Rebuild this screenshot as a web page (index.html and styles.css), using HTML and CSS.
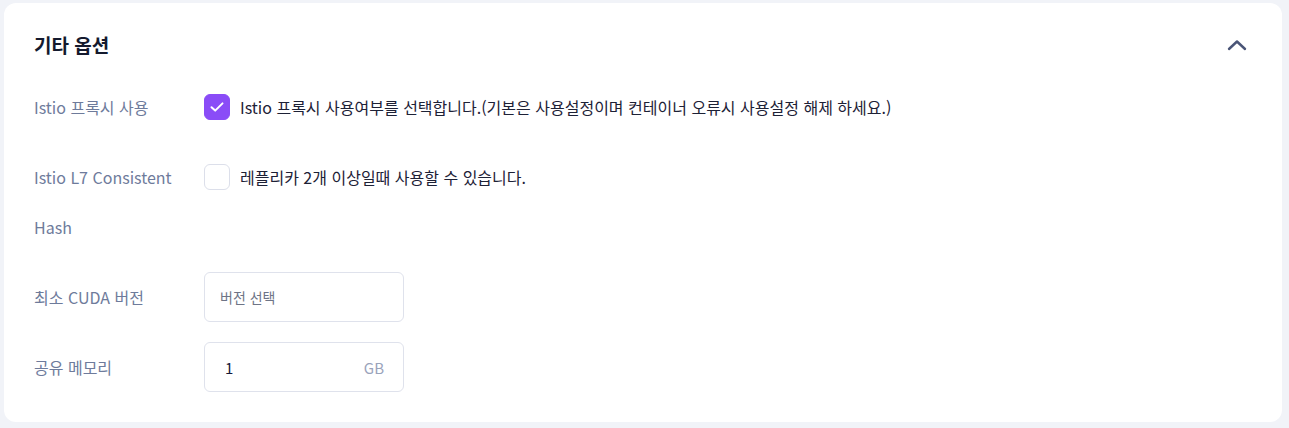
FILE: index.html
```html
<!DOCTYPE html>
<html lang="ko">
<head>
  <meta charset="UTF-8" />
  <meta name="viewport" content="width=device-width, initial-scale=1.0"/>
  <title>기타 옵션</title>
  <link rel="stylesheet" href="styles.css">
</head>
<body>

  <section class="panel">
    <div class="panel-head">
      <h2>기타 옵션</h2>
      <button class="toggle" aria-label="접기">
        <svg width="20" height="12" viewBox="0 0 20 12"><path d="M2 10 L10 2.5 L18 10" fill="none" stroke="#4a5577" stroke-width="2.4" stroke-linecap="round" stroke-linejoin="round"/></svg>
      </button>
    </div>

    <div class="rows">
      <div class="row">
        <div class="label">Istio 프록시 사용</div>
        <label class="check">
          <span class="box checked">
            <svg width="16" height="12" viewBox="0 0 16 12"><path d="M2.5 6.2 L6.2 9.6 L13.5 2.4" fill="none" stroke="#fff" stroke-width="2" stroke-linecap="round" stroke-linejoin="round"/></svg>
          </span>
          Istio 프록시 사용여부를 선택합니다.(기본은 사용설정이며 컨테이너 오류시 사용설정 해제 하세요.)
        </label>
      </div>

      <div class="row">
        <div class="label">Istio L7 Consistent Hash</div>
        <label class="check">
          <span class="box"></span>
          레플리카 2개 이상일때 사용할 수 있습니다.
        </label>
      </div>

      <div class="row">
        <div class="label">최소 CUDA 버전</div>
        <div class="field">
          <span class="placeholder">버전 선택</span>
        </div>
      </div>

      <div class="row">
        <div class="label">공유 메모리</div>
        <div class="field">
          <span class="value">1</span>
          <span class="unit">GB</span>
        </div>
      </div>
    </div>
  </section>

</body>
</html>
```

FILE: styles.css
```css
* {
  margin: 0;
  padding: 0;
  box-sizing: border-box;
}

body {
  font-family: "Noto Sans CJK KR", "Noto Sans", sans-serif;
  background-color: #f1f3f8;
  color: #1d2136;
  padding: 3px 7px 6px 4px;
}

.panel {
  background: #fff;
  border-radius: 12px;
  padding: 24px 30px 30px 30px;
}

.panel-head {
  display: flex;
  justify-content: space-between;
  align-items: center;
  height: 35px;
  margin-bottom: 20px;
}

.panel-head h2 {
  font-size: 19px;
  font-weight: 700;
  color: #141a2e;
}

.toggle {
  border: none;
  background: none;
  display: flex;
  margin-right: 5px;
  cursor: pointer;
}

.rows {
  display: flex;
  flex-direction: column;
  gap: 20px;
}

.row {
  display: flex;
  align-items: flex-start;
}

.label {
  width: 170px;
  flex-shrink: 0;
  font-size: 16px;
  line-height: 50px;
  color: #6e7b9b;
  padding-right: 20px;
}

.check {
  display: flex;
  align-items: center;
  gap: 10px;
  height: 50px;
  font-size: 16px;
  color: #1d2136;
}

.box {
  width: 26px;
  height: 26px;
  border-radius: 6px;
  border: 1px solid #dcdfea;
  background: #fff;
  display: flex;
  align-items: center;
  justify-content: center;
}

.box.checked {
  background: #8a4cf7;
  border-color: #8a4cf7;
}

.field {
  width: 200px;
  height: 50px;
  border: 1px solid #dfe2ec;
  border-radius: 6px;
  display: flex;
  align-items: center;
  justify-content: space-between;
  padding: 0 19px 0 15px;
  font-size: 15px;
}

.placeholder {
  color: #6e7486;
  font-size: 14px;
}

.value {
  color: #141a3a;
  padding-left: 5px;
}

.unit {
  color: #9aa3bb;
}
```
